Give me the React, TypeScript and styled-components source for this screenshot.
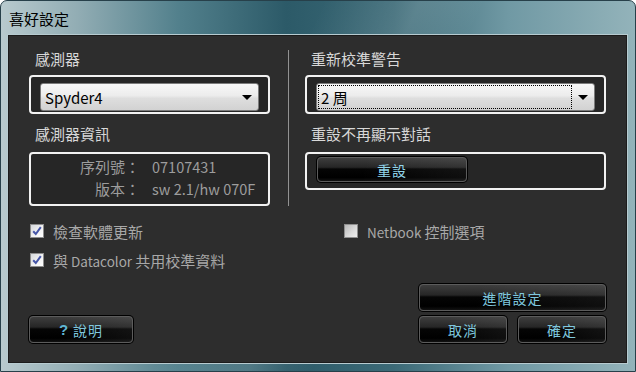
import React from "react";
import styled, { createGlobalStyle } from "styled-components";

const GlobalStyle = createGlobalStyle`
  html, body {
    margin: 0;
    padding: 0;
    background: #ffffff;
  }
  body {
    font-family: "Noto Sans CJK TC", "Noto Sans", sans-serif;
  }
`;

const Window = styled.div`
  width: 636px;
  height: 372px;
  box-sizing: border-box;
  display: flex;
  flex-direction: column;
  border: 1px solid #27404a;
  border-radius: 7px 7px 0 0;
  overflow: hidden;
  background:
    linear-gradient(115deg, rgba(255,255,255,0) 40%, rgba(255,255,255,0.12) 52%, rgba(255,255,255,0) 60%),
    linear-gradient(90deg, #b8cace 0%, #92adb4 12%, #52808c 28%, #2c5a68 45%, #3c6a77 62%, #7099a4 80%, #93b3ba 100%);
`;

const TitleBar = styled.div`
  height: 33px;
  display: flex;
  align-items: center;
  padding-left: 8px;
  flex-shrink: 0;
`;

const Title = styled.span`
  font-size: 15px;
  color: #000;
  line-height: 1;
  margin-top: 1px;
`;

const Frame = styled.div`
  flex: 1;
  display: flex;
  padding: 0 7px 7px 6px;
  min-height: 0;
`;

const Panel = styled.div`
  flex: 1;
  display: flex;
  flex-direction: column;
  background: #2d2d2d;
  border: 1px solid #b7cbd0;
  padding: 13px 21px 20px 21px;
  box-shadow: inset 0 0 0 1px #1c1c1c;
`;

const Columns = styled.div`
  display: flex;
  align-items: stretch;
`;

const Column = styled.div<{ $width: number }>`
  width: ${(p) => p.$width}px;
  display: flex;
  flex-direction: column;
`;

const Divider = styled.div`
  width: 1px;
  background: #bdbdbd;
  margin: 2px 16px 0 18px;
  opacity: 0.7;
`;

const Label = styled.div<{ $gap?: number }>`
  font-size: 15px;
  line-height: 22px;
  color: #d8d8d8;
  padding-left: 6px;
  margin-top: ${(p) => p.$gap ?? 0}px;
`;

const Latin = styled.span<{ $size?: number }>`
  font-size: ${(p) => p.$size ?? 13.5}px;
`;

const Group = styled.div<{ $gap: number }>`
  margin-top: ${(p) => p.$gap}px;
  border: 2px solid #f2f2f2;
  border-radius: 4px;
  background: #262626;
`;

const SelectWrap = styled(Group)`
  padding: 6px 9px 1px 9px;
`;

const Select = styled.div`
  height: 28px;
  box-sizing: border-box;
  display: flex;
  align-items: center;
  border: 1px solid #7c7c7c;
  border-radius: 3px;
  background: linear-gradient(to bottom, #f8f8f8 0%, #ececec 45%, #dedede 55%, #d2d2d2 100%);
  padding: 1px 0 1px 1px;
`;

const SelectValue = styled.div<{ $focused?: boolean }>`
  flex: 1;
  height: 100%;
  box-sizing: border-box;
  display: flex;
  align-items: center;
  padding-left: 2px;
  font-size: 15px;
  color: #000;
  border: 1px dotted ${(p) => (p.$focused ? "#000" : "transparent")};
`;

const Arrow = styled.div`
  width: 22px;
  display: flex;
  justify-content: center;
  align-items: center;
  &::after {
    content: "";
    border-left: 5px solid transparent;
    border-right: 5px solid transparent;
    border-top: 5px solid #000;
  }
`;

const InfoBox = styled(Group)`
  padding: 2px 0 4px 0;
  display: grid;
  grid-template-columns: 109px 1fr;
  column-gap: 12px;
  font-size: 15px;
  line-height: 22px;
  color: #9d9d9d;
`;

const InfoKey = styled.span`
  text-align: right;
`;

const ResetBox = styled(Group)`
  padding: 3px 10px 6px 10px;
  display: flex;
`;

const Button = styled.button<{ $width?: number }>`
  width: ${(p) => (p.$width ? `${p.$width}px` : "100%")};
  height: 27px;
  box-sizing: border-box;
  border: 1px solid #5c5c5c;
  border-radius: 4px;
  box-shadow: 0 0 0 1px #000;
  background:
    linear-gradient(100deg, rgba(255,255,255,0) 30%, rgba(255,255,255,0.06) 100%),
    linear-gradient(to bottom, #3d3d3d 0%, #262626 40%, #050505 48%, #000 85%, #121212 100%);
  color: #7fc7de;
  font-family: "Noto Sans CJK TC", "Noto Sans", sans-serif;
  font-size: 14px;
  letter-spacing: 1px;
  display: flex;
  align-items: center;
  justify-content: center;
  gap: 2px;
  padding: 0;
  cursor: pointer;
`;

const ResetButton = styled(Button)`
  width: 150px;
  height: 25px;
  color: #92d5ea;
`;

const HelpMark = styled.span`
  font-family: "Liberation Sans", sans-serif;
  font-weight: bold;
  font-size: 15px;
  color: #5fb6d4;
  margin-right: 2px;
`;

const Options = styled.div`
  margin-top: 15px;
  display: grid;
  grid-template-columns: 314px 1fr;
  row-gap: 9px;
  padding-left: 1px;
`;

const Option = styled.label<{ $col?: number; $row?: number }>`
  grid-column: ${(p) => p.$col ?? 1};
  grid-row: ${(p) => p.$row ?? "auto"};
  display: flex;
  align-items: center;
  gap: 9px;
  height: 20px;
  font-size: 15px;
  color: #a8a8a8;
  white-space: pre;
`;

const Box = styled.span<{ $checked: boolean }>`
  width: 14px;
  height: 14px;
  box-sizing: border-box;
  border: 1px solid #8e8e8e;
  background: ${(p) =>
    p.$checked
      ? "linear-gradient(135deg, #d5d8dc 0%, #f4f4f4 60%, #ffffff 100%)"
      : "linear-gradient(135deg, #b9b9b9 0%, #dcdcdc 60%, #ededed 100%)"};
  display: flex;
  align-items: center;
  justify-content: center;
  flex-shrink: 0;
`;

const Footer = styled.div`
  margin-top: auto;
  display: flex;
  justify-content: space-between;
  align-items: flex-end;
`;

const RightButtons = styled.div`
  width: 187px;
  display: flex;
  flex-direction: column;
  gap: 5px;
`;

const ButtonRow = styled.div`
  display: flex;
  justify-content: space-between;
`;

const Check = ({ checked }: { checked: boolean }) => (
  <Box $checked={checked}>
    {checked && (
      <svg width="12" height="12" viewBox="0 0 12 12">
        <path d="M2.2 6.2 L4.8 9 L9.8 2.2" fill="none" stroke="#4656a8" strokeWidth="2" />
      </svg>
    )}
  </Box>
);

export default function App() {
  return (
    <>
      <GlobalStyle />
      <Window>
        <TitleBar>
          <Title>喜好設定</Title>
        </TitleBar>
        <Frame>
          <Panel>
            <Columns>
              <Column $width={241}>
                <Label>感測器</Label>
                <SelectWrap $gap={5}>
                  <Select>
                    <SelectValue>Spyder4</SelectValue>
                    <Arrow />
                  </Select>
                </SelectWrap>
                <Label $gap={9}>感測器資訊</Label>
                <InfoBox $gap={7}>
                  <InfoKey>序列號：</InfoKey>
                  <Latin $size={14.5}>07107431</Latin>
                  <InfoKey>版本：</InfoKey>
                  <Latin $size={14.5}>sw 2.1/hw 070F</Latin>
                </InfoBox>
              </Column>
              <Divider />
              <Column $width={301}>
                <Label>重新校準警告</Label>
                <SelectWrap $gap={5}>
                  <Select>
                    <SelectValue $focused>2 周</SelectValue>
                    <Arrow />
                  </Select>
                </SelectWrap>
                <Label $gap={9}>重設不再顯示對話</Label>
                <ResetBox $gap={7}>
                  <ResetButton>重設</ResetButton>
                </ResetBox>
              </Column>
            </Columns>

            <Options>
              <Option $col={1} $row={1}>
                <Check checked />
                <span>檢查軟體更新</span>
              </Option>
              <Option $col={2} $row={1}>
                <Check checked={false} />
                <span>
                  <Latin>Netbook </Latin>控制選項
                </span>
              </Option>
              <Option $col={1} $row={2}>
                <Check checked />
                <span>
                  與<Latin> Datacolor </Latin>共用校準資料
                </span>
              </Option>
            </Options>

            <Footer>
              <Button $width={104}>
                <HelpMark>?</HelpMark>說明
              </Button>
              <RightButtons>
                <Button>進階設定</Button>
                <ButtonRow>
                  <Button $width={88}>取消</Button>
                  <Button $width={88}>確定</Button>
                </ButtonRow>
              </RightButtons>
            </Footer>
          </Panel>
        </Frame>
      </Window>
    </>
  );
}
